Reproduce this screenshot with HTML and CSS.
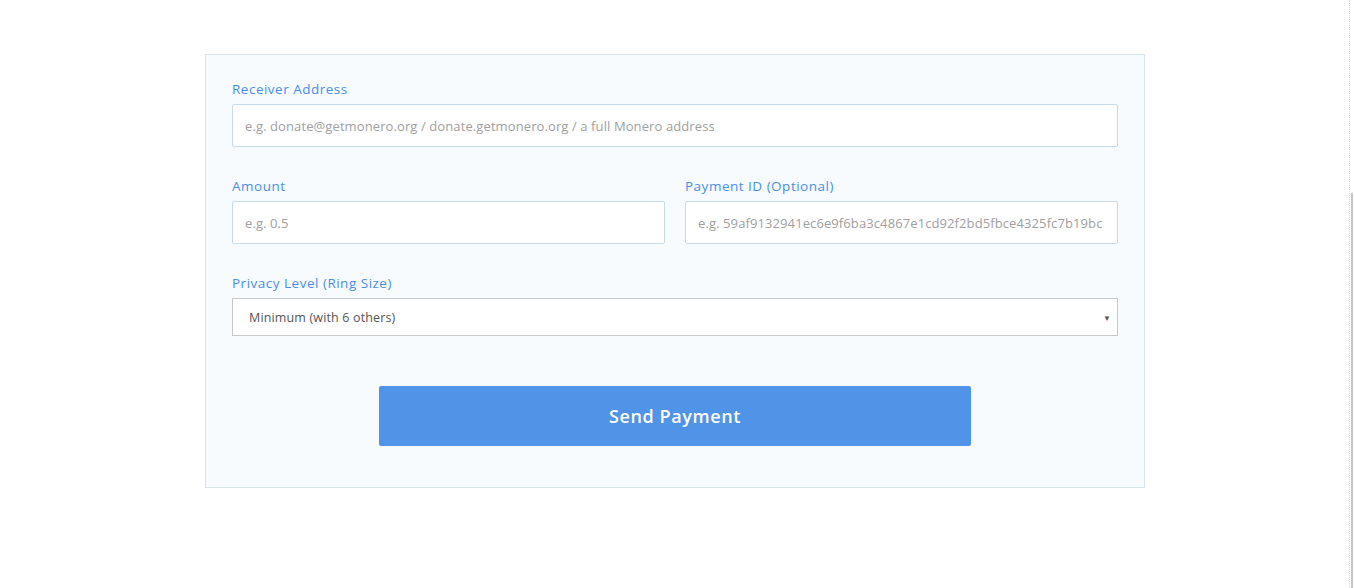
FILE: index.html
```html
<!DOCTYPE html>
<html>
<head>
<meta charset="utf-8">
<link rel="stylesheet" href="styles.css">
</head>
<body>
<div class="page">
  <form class="card">
    <div class="field">
      <label class="label">Receiver Address</label>
      <input class="input" type="text" placeholder="e.g. donate@getmonero.org / donate.getmonero.org / a full Monero address">
    </div>
    <div class="row">
      <div class="field">
        <label class="label">Amount</label>
        <input class="input" type="text" placeholder="e.g. 0.5">
      </div>
      <div class="field">
        <label class="label">Payment ID (Optional)</label>
        <input class="input" type="text" placeholder="e.g. 59af9132941ec6e9f6ba3c4867e1cd92f2bd5fbce4325fc7b19bc">
      </div>
    </div>
    <div class="field">
      <label class="label">Privacy Level (Ring Size)</label>
      <div class="select">
        <span class="select-value">Minimum (with 6 others)</span>
        <span class="caret">▼</span>
      </div>
    </div>
    <div class="actions">
      <button class="btn" type="button">Send Payment</button>
    </div>
  </form>
</div>
<div class="scrollbar"><div class="thumb"></div></div>
</body>
</html>
```
FILE: styles.css
```css
html, body {
  margin: 0;
  padding: 0;
  background: #ffffff;
  font-family: "Open Sans", Lato, "Liberation Sans", sans-serif;
}
.page {
  width: 1350px;
  padding-top: 54px;
  display: flex;
  justify-content: center;
}
.card {
  width: 886px;
  padding: 25px 26px 41px 26px;
  background: #f7fbfe;
  border: 1px solid #d5e3ee;
  display: flex;
  flex-direction: column;
}
.field {
  display: flex;
  flex-direction: column;
  flex: 1;
  min-width: 0;
}
.label {
  color: #4a8fe6;
  font-size: 13.5px;
  font-weight: 500;
  letter-spacing: 0.5px;
  line-height: 18px;
  margin-bottom: 6px;
}
.input {
  box-sizing: border-box;
  height: 43px;
  border: 1px solid #c7daea;
  border-radius: 2px;
  background: #ffffff;
  padding: 0 11px 0 12px;
  font-family: inherit;
  font-size: 13px;
  letter-spacing: 0.1px;
  color: #555;
  outline: none;
}
.input::placeholder {
  color: #a0a0a0;
}
.row {
  display: flex;
  gap: 20px;
  margin-top: 30px;
}
.row + .field {
  margin-top: 30px;
}
.select {
  box-sizing: border-box;
  height: 38px;
  border: 1px solid #c8c8c8;
  background: #ffffff;
  display: flex;
  align-items: center;
  justify-content: space-between;
  padding: 0 6px 0 16px;
}
.select-value {
  color: #555;
  font-size: 12.5px;
  letter-spacing: 0.15px;
}
.caret {
  font-size: 8px;
  color: #555;
}
.actions {
  display: flex;
  justify-content: center;
  margin-top: 50px;
}
.btn {
  width: 592px;
  height: 60px;
  border: none;
  border-radius: 2px;
  background: #5094e8;
  color: #ffffff;
  font-family: inherit;
  font-size: 18px;
  font-weight: 600;
  letter-spacing: 0.6px;
  cursor: pointer;
}
.scrollbar {
  position: fixed;
  top: 0;
  right: 0;
  width: 4px;
  height: 588px;
  background: #ffffff;
  border-left: 1px dotted #c9d7e6;
}
.thumb {
  margin-top: 193px;
  margin-left: 1px;
  width: 2px;
  height: 395px;
  background: #c6c6c6;
}
```
